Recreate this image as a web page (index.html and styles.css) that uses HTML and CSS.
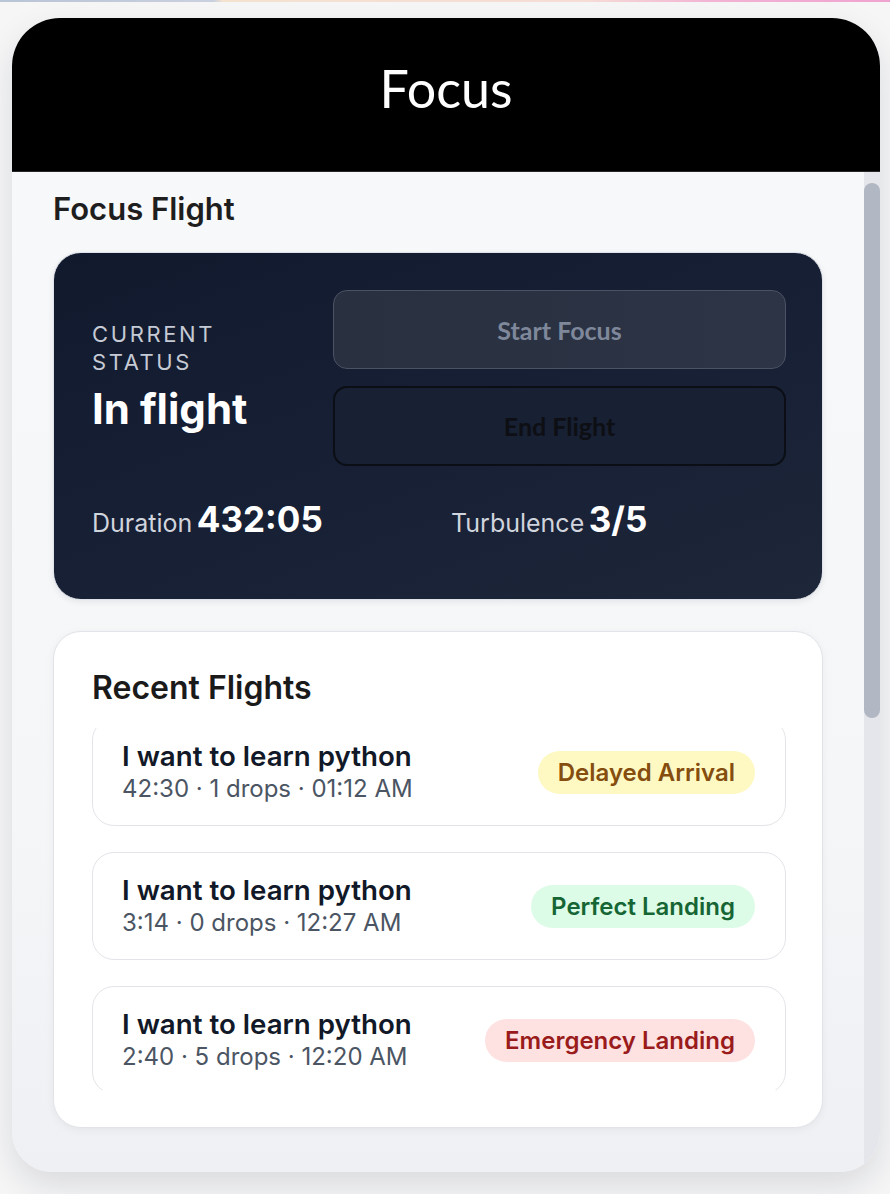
FILE: index.html
```html
<!DOCTYPE html>
<html lang="en">
<head>
  <meta charset="UTF-8">
  <meta name="viewport" content="width=device-width, initial-scale=1.0">
  <title>Focus</title>
  <link rel="stylesheet" href="styles.css">
</head>
<body>

  <div class="topline"></div>

  <div class="app">
    <header class="app-header">
      <h1>Focus</h1>
    </header>

    <div class="app-main">
      <main class="app-body">
        <h2 class="section-title">Focus Flight</h2>

        <section class="status-card">
          <div class="status-top">
            <div class="status-info">
              <div class="status-label">Current status</div>
              <div class="status-value">In flight</div>
            </div>
            <div class="status-actions">
              <button class="btn btn-start">Start Focus</button>
              <button class="btn btn-end">End Flight</button>
            </div>
          </div>

          <div class="status-stats">
            <div class="stat"><span class="stat-label">Duration</span> <span class="stat-value">432:05</span></div>
            <div class="stat"><span class="stat-label">Turbulence</span> <span class="stat-value">3/5</span></div>
          </div>
        </section>

        <section class="recent-card">
          <h3>Recent Flights</h3>

          <div class="flight-list">
            <div class="flight-list-inner">
              <div class="flight">
                <div class="flight-info">
                  <div class="flight-title">I want to learn python</div>
                  <div class="flight-meta">42:30 · 1 drops · 01:12 AM</div>
                </div>
                <span class="badge badge-delayed">Delayed Arrival</span>
              </div>

              <div class="flight">
                <div class="flight-info">
                  <div class="flight-title">I want to learn python</div>
                  <div class="flight-meta">3:14 · 0 drops · 12:27 AM</div>
                </div>
                <span class="badge badge-perfect">Perfect Landing</span>
              </div>

              <div class="flight">
                <div class="flight-info">
                  <div class="flight-title">I want to learn python</div>
                  <div class="flight-meta">2:40 · 5 drops · 12:20 AM</div>
                </div>
                <span class="badge badge-emergency">Emergency Landing</span>
              </div>
            </div>
          </div>
        </section>
      </main>

      <!-- barra de rolagem desenhada -->
      <div class="scrollbar"><div class="scrollbar-thumb"></div></div>
    </div>
  </div>

</body>
</html>
```

FILE: styles.css
```css
/* Reset */
* {
  margin: 0;
  padding: 0;
  box-sizing: border-box;
}

body {
  font-family: 'Inter', 'Roboto', sans-serif;
  background-color: #f6f6f7;
  color: #1f1f1f;
  height: 1194px;
  overflow: hidden;
}

/* Faixa colorida no topo */
.topline {
  height: 2px;
  background: linear-gradient(90deg, #b9c4d7 0%, #c9d0de 24%, #f4e2cf 25%, #f6dcd6 66%, #f2b3d4 80%, #f0a3d0 100%);
}

/* Painel principal */
.app {
  display: flex;
  flex-direction: column;
  width: 868px;
  height: 1154px;
  margin: 16px 0 0 12px;
  border-radius: 48px 48px 40px 40px;
  overflow: hidden;
  background: linear-gradient(180deg, #f8f9fb 0%, #f5f6f8 70%, #eff0f3 100%);
  box-shadow: 0 14px 34px rgba(15, 23, 42, 0.12);
}

/* Cabeçalho */
.app-header {
  height: 154px;
  flex-shrink: 0;
  background-color: #000;
  border-bottom: 1px solid #262626;
  display: flex;
  align-items: center;
  justify-content: center;
}

.app-header h1 {
  font-family: 'Lato', sans-serif;
  font-weight: 400;
  font-size: 52px;
  color: #fff;
  padding-bottom: 14px;
}

.app-main {
  flex: 1;
  min-height: 0;
  display: flex;
}

/* Área de conteúdo */
.app-body {
  flex: 1;
  overflow: hidden;
  padding: 21px 41px 0;
}

.scrollbar {
  width: 16px;
  flex-shrink: 0;
  padding-top: 11px;
  background-color: #e4e6eb;
}

.scrollbar-thumb {
  height: 535px;
  border-radius: 8px;
  background-color: #b1b7c3;
}

.section-title {
  font-size: 31px;
  line-height: 32px;
  font-weight: 600;
  color: #1e1e1e;
  margin-bottom: 27px;
}

/* Cartão de status */
.status-card {
  height: 348px;
  padding: 37px 36px 0 38px;
  border-radius: 28px;
  border: 1px solid #dfe2e8;
  background: linear-gradient(160deg, #111a2d 0%, #172035 55%, #1e2639 100%);
  box-shadow: 0 2px 6px rgba(15, 23, 42, 0.08);
}

.status-top {
  display: grid;
  grid-template-columns: 217px 1fr;
  column-gap: 24px;
  align-items: center;
}

.status-info {
  margin-top: -2px;
}

.status-label {
  font-size: 22px;
  line-height: 28px;
  letter-spacing: 2.6px;
  text-transform: uppercase;
  color: #c5cad5;
  margin-bottom: 8px;
}

.status-value {
  font-size: 42px;
  line-height: 50px;
  font-weight: 700;
  color: #fff;
}

.status-actions {
  display: flex;
  flex-direction: column;
  gap: 17px;
}

.btn {
  height: 79px;
  border-radius: 14px;
  font-family: 'Lato', sans-serif;
  font-weight: 700;
  font-size: 25px;
  cursor: pointer;
}

.btn-start {
  background: linear-gradient(90deg, #29303f, #2c3446);
  border: 1.5px solid #4a5264;
  color: #7f889b;
}

.btn-end {
  height: 80px;
  background-color: #182033;
  border: 2px solid #0b0e14;
  color: #0d0f14;
}

.status-stats {
  display: grid;
  grid-template-columns: 1fr 1fr;
  column-gap: 24px;
  margin-top: 32px;
}

.stat-label {
  font-size: 25px;
  color: #d0d4dd;
}

.stat-value {
  font-size: 35px;
  font-weight: 700;
  color: #fff;
}

/* Voos recentes */
.recent-card {
  margin-top: 31px;
  padding: 37px 36px 37px 38px;
  background-color: #fff;
  border: 1px solid #e1e3e8;
  border-radius: 28px;
  box-shadow: 0 2px 8px rgba(15, 23, 42, 0.05);
}

.recent-card h3 {
  font-size: 32px;
  line-height: 38px;
  font-weight: 600;
  color: #1a1a1a;
  margin-bottom: 21px;
}

.flight-list {
  height: 362px;
  overflow: hidden;
}

.flight-list-inner {
  display: flex;
  flex-direction: column;
  gap: 26px;
  margin-top: -10px;
}

.flight {
  display: flex;
  align-items: center;
  justify-content: space-between;
  padding: 22px 30px 22px 29px;
  border: 1px solid #e2e4e9;
  border-radius: 22px;
  background-color: #fff;
}

.flight-title {
  font-size: 27.7px;
  line-height: 30px;
  font-weight: 600;
  color: #111827;
}

.flight-meta {
  font-size: 24px;
  line-height: 28px;
  margin-top: 4px;
  color: #4b5563;
}

.badge {
  padding: 0 20px;
  height: 43px;
  line-height: 43px;
  border-radius: 22px;
  font-size: 24px;
  font-weight: 600;
  white-space: nowrap;
}

.badge-delayed {
  background-color: #fef9c3;
  color: #854d0e;
}

.badge-perfect {
  background-color: #dcfce7;
  color: #166534;
}

.badge-emergency {
  background-color: #fee2e2;
  color: #991b1b;
}
```
